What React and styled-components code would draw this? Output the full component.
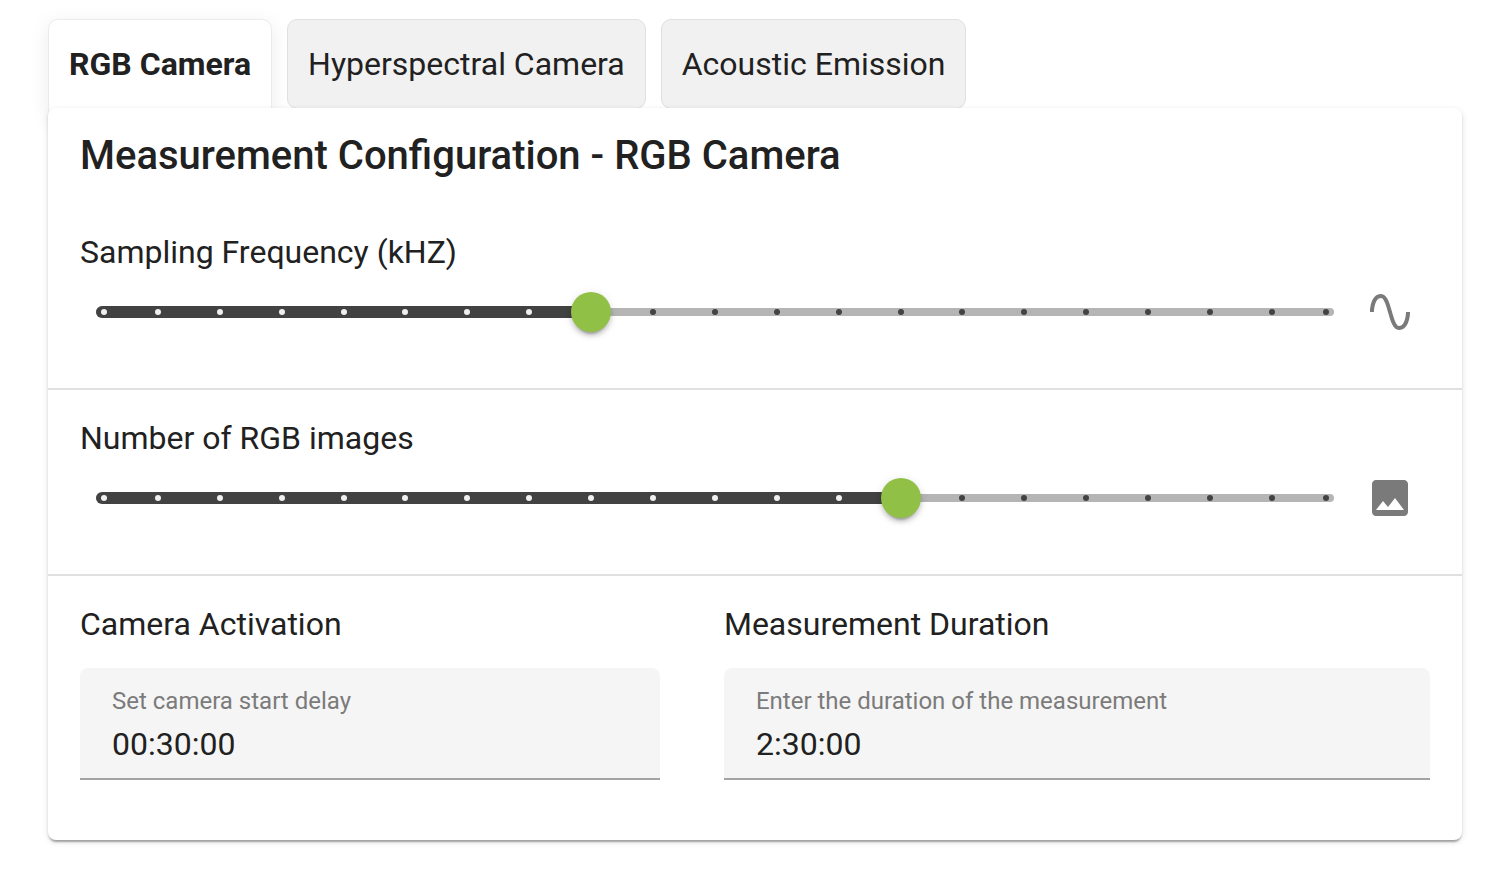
import React, { useId, useState } from "react";
import styled, { createGlobalStyle } from "styled-components";

const GlobalStyle = createGlobalStyle`
  *, *::before, *::after { box-sizing: border-box; }
  body {
    margin: 0;
    background: #fff;
    color: #212121;
    font-family: Roboto, "Liberation Sans", sans-serif;
    font-size: 32px;
    line-height: 48px;
    -webkit-font-smoothing: antialiased;
  }
`;

const Page = styled.main`
  padding: 19px 37px 36px 48px;
`;

const TabList = styled.div`
  display: flex;
  gap: 15px;
  height: 89px;
`;

/* Tabs reach below the list so that the card covers their lower border. */
const Tab = styled.button`
  height: ${(p) => (p.$active ? "100px" : "90px")};
  padding: ${(p) => (p.$active ? "0 20px 11px" : "0 20px 1px")};
  border: 1px solid ${(p) => (p.$active ? "#ebebeb" : "#e0e0e0")};
  border-radius: 10px;
  background: ${(p) => (p.$active ? "#fff" : "#f1f1f1")};
  box-shadow: ${(p) => (p.$active ? "0 4px 20px rgba(0, 0, 0, 0.08)" : "none")};
  color: inherit;
  font: inherit;
  font-weight: ${(p) => (p.$active ? 700 : 400)};
  white-space: nowrap;
  cursor: pointer;
`;

const Card = styled.section`
  position: relative;
  border-radius: 8px;
  background: #fff;
  box-shadow:
    0 4px 2px -2px rgba(0, 0, 0, 0.2),
    0 2px 2px 0 rgba(0, 0, 0, 0.14),
    0 2px 6px 0 rgba(0, 0, 0, 0.12);
`;

const Title = styled.h1`
  margin: 0;
  padding: 16px 32px;
  font-size: 40px;
  line-height: 64px;
  font-weight: 500;
`;

const SliderSection = styled.div`
  padding: 24px 32px 56px;
  border-bottom: 2px solid #e0e0e0;
`;

const Heading = styled.label`
  display: block;
`;

const SliderRow = styled.div`
  display: flex;
  align-items: center;
  gap: 32px;
  height: 40px;
  margin-top: 16px;
  padding: 0 16px;
  color: #7a7a7a;

  svg {
    flex: none;
    display: block;
    width: 48px;
    height: 48px;
  }
`;

const SliderBox = styled.div`
  flex: 1;
  display: grid;
  grid-template-columns: minmax(0, 1fr);
  align-items: center;
  height: 40px;

  > * { grid-area: 1 / 1; }
`;

const Track = styled.div`
  height: 8px;
  border-radius: 4px;
  background: #b5b5b5;
`;

const ActiveTrack = styled.div`
  height: 12px;
  border-radius: 6px;
  background: #424242;
`;

const Ticks = styled.div`
  display: flex;
  justify-content: space-between;
  margin: 0 -3px;
`;

const Tick = styled.span`
  width: 6px;
  height: 6px;
  border-radius: 50%;
  background: ${(p) => (p.$active ? "#f0f0f0" : "#424242")};

  &:first-child { margin: 0 -8px 0 8px; }
  &:last-child { margin: 0 8px 0 -8px; }
`;

const Range = styled.input`
  appearance: none;
  height: 40px;
  margin: 0 -20px;
  background: transparent;
  cursor: pointer;
  z-index: 1;

  &::-webkit-slider-thumb {
    appearance: none;
    width: 40px;
    height: 40px;
    border: 0;
    border-radius: 50%;
    background: #91c046;
    box-shadow:
      0 6px 2px -4px rgba(0, 0, 0, 0.2),
      0 4px 4px 0 rgba(0, 0, 0, 0.14),
      0 2px 10px 0 rgba(0, 0, 0, 0.12);
  }
`;

const Columns = styled.div`
  display: grid;
  grid-template-columns: 46fr 56fr;
  gap: 64px;
  padding: 24px 32px 60px;
`;

const GroupTitle = styled.h2`
  margin: 0 0 20px;
  font-size: 32px;
  line-height: 48px;
  font-weight: 400;
`;

const FieldBox = styled.div`
  display: flex;
  flex-direction: column;
  gap: 6px;
  height: 112px;
  padding: 16px 32px 0;
  border-bottom: 2px solid #a3a3a3;
  border-radius: 8px 8px 0 0;
  background: #f5f5f5;
`;

const FieldLabel = styled.label`
  color: #7b7b7b;
  font-size: 24px;
  line-height: 34px;
`;

const FieldInput = styled.input`
  width: 100%;
  height: 40px;
  padding: 0;
  border: 0;
  outline: 0;
  background: transparent;
  color: inherit;
  font: inherit;
`;

const WaveIcon = () => (
  <svg viewBox="0 0 24 24" fill="currentColor" aria-hidden="true">
    <path d="M16.5 21c-3 0-4.19-4.24-5.45-8.72C10.14 9.04 9 5 7.5 5 4.11 5 4 11.93 4 12H2c0-.37.06-9 5.5-9 3 0 4.21 4.25 5.47 8.74C13.83 14.8 15 19 16.5 19c3.44 0 3.53-6.93 3.53-7h2c0 .37-.06 9-5.53 9z" />
  </svg>
);

const ImageIcon = () => (
  <svg viewBox="0 0 24 24" fill="currentColor" aria-hidden="true">
    <path d="M21 19V5c0-1.1-.9-2-2-2H5c-1.1 0-2 .9-2 2v14c0 1.1.9 2 2 2h14c1.1 0 2-.9 2-2zM8.5 13.500l2.500 3.010L14.500 12l4.500 6H5l3.500-4.500z" />
  </svg>
);

const STEPS = 20;

function Slider({ label, initial, icon }) {
  const id = useId();
  const [value, setValue] = useState(initial);
  return (
    <SliderSection>
      <Heading htmlFor={id}>{label}</Heading>
      <SliderRow>
        <SliderBox>
          <Track />
          <ActiveTrack style={{ width: `${(value / STEPS) * 100}%` }} />
          <Ticks>
            {Array.from({ length: STEPS + 1 }, (_, i) => (
              <Tick key={i} $active={i <= value} />
            ))}
          </Ticks>
          <Range
            id={id}
            type="range"
            min="0"
            max={STEPS}
            value={value}
            onChange={(e) => setValue(Number(e.target.value))}
          />
        </SliderBox>
        {icon}
      </SliderRow>
    </SliderSection>
  );
}

function TimeField({ title, label, initial }) {
  const id = useId();
  return (
    <div>
      <GroupTitle>{title}</GroupTitle>
      <FieldBox>
        <FieldLabel htmlFor={id}>{label}</FieldLabel>
        <FieldInput id={id} type="text" defaultValue={initial} />
      </FieldBox>
    </div>
  );
}

const TABS = ["RGB Camera", "Hyperspectral Camera", "Acoustic Emission"];

export default function App() {
  const [tab, setTab] = useState(TABS[0]);
  return (
    <>
      <GlobalStyle />
      <Page>
        <TabList role="tablist">
          {TABS.map((name) => (
            <Tab
              key={name}
              type="button"
              role="tab"
              aria-selected={name === tab}
              $active={name === tab}
              onClick={() => setTab(name)}
            >
              {name}
            </Tab>
          ))}
        </TabList>
        <Card role="tabpanel">
          <Title>Measurement Configuration - {tab}</Title>
          <Slider label="Sampling Frequency (kHZ)" initial={8} icon={<WaveIcon />} />
          <Slider label="Number of RGB images" initial={13} icon={<ImageIcon />} />
          <Columns>
            <TimeField title="Camera Activation" label="Set camera start delay" initial="00:30:00" />
            <TimeField
              title="Measurement Duration"
              label="Enter the duration of the measurement"
              initial="2:30:00"
            />
          </Columns>
        </Card>
      </Page>
    </>
  );
}
